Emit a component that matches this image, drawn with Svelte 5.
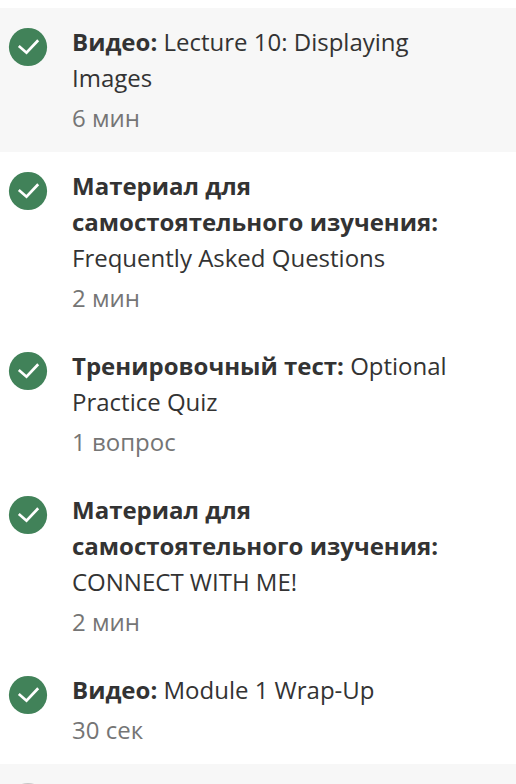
<script>
  const items = [
    { kind: 'Видео:', title: 'Lecture 10: Displaying Images', meta: '6 мин', active: true },
    { kind: 'Материал для самостоятельного изучения:', title: 'Frequently Asked Questions', meta: '2 мин' },
    { kind: 'Тренировочный тест:', title: 'Optional Practice Quiz', meta: '1 вопрос' },
    { kind: 'Материал для самостоятельного изучения:', title: 'CONNECT WITH ME!', meta: '2 мин' },
    { kind: 'Видео:', title: 'Module 1 Wrap-Up', meta: '30 сек' }
  ];
</script>

<main>
  <ul>
    {#each items as item}
      <li class:active={item.active}>
        <svg class="done" viewBox="0 0 38 38" aria-hidden="true">
          <circle cx="19" cy="19" r="19.1" fill="#418259" />
          <path d="M9.8 18 17.5 24.7 29.2 12.3" fill="none" stroke="#fff" stroke-width="2.7" />
        </svg>
        <div class="body">
          <div class="title"><strong>{item.kind}</strong> <span>{item.title}</span></div>
          <div class="meta">{item.meta}</div>
        </div>
      </li>
    {/each}
  </ul>
  <div class="next">
    <svg class="pending" viewBox="0 0 38 38" aria-hidden="true">
      <circle cx="19" cy="19" r="18" fill="none" stroke="#c8c8c8" stroke-width="2" />
    </svg>
  </div>
</main>

<style>
  :global(body) { margin: 0; background: #fff; }
  main {
    height: 784px;
    box-sizing: border-box;
    padding-top: 8px;
    overflow: hidden;
    display: flex;
    flex-direction: column;
    font-family: "Open Sans", "Noto Sans", sans-serif;
    font-size: 24px;
    line-height: 36px;
    color: #333;
  }
  ul { list-style: none; margin: 0; padding: 0; flex: none; }
  li { display: flex; align-items: flex-start; gap: 25px; padding: 16px 60px 16px 9px; }
  .active { background: #f7f7f7; }
  .done { width: 38px; height: 38px; flex: none; margin-top: 4px; overflow: visible; }
  .body { flex: 1; min-width: 0; }
  .meta { margin-top: 4px; color: #757575; }
  .next { height: 20px; flex: none; overflow: hidden; background: #f7f7f7; }
  .pending { display: block; width: 38px; height: 38px; margin: 19.4px 0 0 9px; }
</style>
